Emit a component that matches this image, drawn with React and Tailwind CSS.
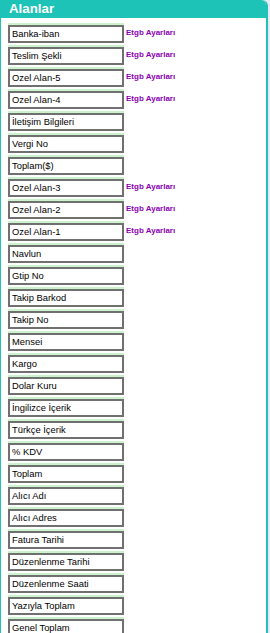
import React from "react";

const rows = [
  ["Banka-iban", true],
  ["Teslim Şekli", true],
  ["Ozel Alan-5", true],
  ["Ozel Alan-4", true],
  ["İletişim Bilgileri", false],
  ["Vergi No", false],
  ["Toplam($)", false],
  ["Ozel Alan-3", true],
  ["Ozel Alan-2", true],
  ["Ozel Alan-1", true],
  ["Navlun", false],
  ["Gtip No", false],
  ["Takip Barkod", false],
  ["Takip No", false],
  ["Mensei", false],
  ["Kargo", false],
  ["Dolar Kuru", false],
  ["İngilizce İçerik", false],
  ["Türkçe İçerik", false],
  ["% KDV", false],
  ["Toplam", false],
  ["Alıcı Adı", false],
  ["Alıcı Adres", false],
  ["Fatura Tarihi", false],
  ["Düzenlenme Tarihi", false],
  ["Düzenlenme Saati", false],
  ["Yazıyla Toplam", false],
  ["Genel Toplam", false],
];

export default function App() {
  return (
    <div
      className="w-[270px] h-[633px] overflow-hidden bg-[#e9e9f6]"
      style={{ fontFamily: '"Liberation Sans", Arial, sans-serif' }}
    >
      <div className="w-[268px] min-h-[700px] bg-white border-l border-r-2 border-[#1ec3b8] rounded-tr-[6px]">
        <div className="h-[18px] bg-[#1ec3b8] rounded-tr-[5px] flex items-center pl-[8px]">
          <span className="text-white font-bold text-[13.3px] leading-none">Alanlar</span>
        </div>
        <div className="flex flex-col gap-[2px] pt-[5px] pl-[7px]">
          {rows.map(([label, etgb]) => (
            <div key={label} className="flex items-start">
              <div className="w-[116px] bg-[#ccf3cc] pt-[2px]">
                <div className="h-[18px] border-2 border-[#707070] bg-white flex items-center pl-[2px]">
                  <span className="text-[9.4px] text-black leading-none whitespace-nowrap">{label}</span>
                </div>
              </div>
              {etgb && (
                <div className="h-[20px] flex items-center pl-[2px]">
                  <span className="text-[8px] font-bold text-[#8b00b5] leading-none whitespace-nowrap">
                    Etgb Ayarları
                  </span>
                </div>
              )}
            </div>
          ))}
        </div>
      </div>
    </div>
  );
}
